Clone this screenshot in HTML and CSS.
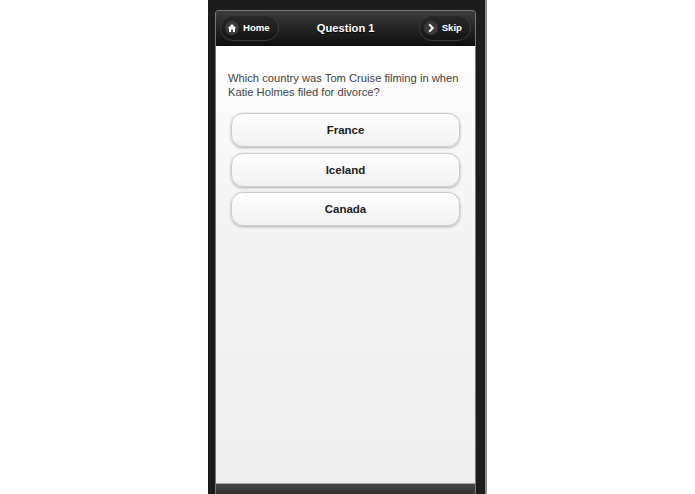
FILE: index.html
```html
<!DOCTYPE html>
<html lang="en">
<head>
    <meta charset="UTF-8">
    <title>Question 1</title>
    <link rel="stylesheet" href="styles.css">
</head>
<body>
    <div class="phone">
        <div class="screen">
            <div class="header">
                <a class="nav-btn">
                    <span class="nav-icon">
                        <svg width="10" height="10" viewBox="0 0 10 10"><path d="M5 1 L9.2 5.2 H8 V9 H5.9 V6.4 H4.1 V9 H2 V5.2 H0.8 Z" fill="#fff"/></svg>
                    </span>
                    Home
                </a>
                <h1>Question 1</h1>
                <a class="nav-btn">
                    <span class="nav-icon">
                        <svg width="10" height="10" viewBox="0 0 10 10"><path d="M3.2 1.4 L6.8 5 L3.2 8.6" fill="none" stroke="#fff" stroke-width="2"/></svg>
                    </span>
                    Skip
                </a>
            </div>
            <div class="content">
                <p class="question">Which country was Tom Cruise filming in when Katie Holmes filed for divorce?</p>
                <div class="answers">
                    <button>France</button>
                    <button>Iceland</button>
                    <button>Canada</button>
                </div>
            </div>
            <div class="footer"></div>
        </div>
    </div>
</body>
</html>
```

FILE: styles.css
```css
html, body {
    height: 100%;
}
body {
    margin: 0;
    background-color: #fff;
    font-family: "Liberation Sans", Arial, sans-serif;
    overflow: hidden;
}
.phone {
    box-sizing: border-box;
    width: 279px;
    height: 494px;
    margin-left: 208px;
    padding: 10px 9px 0 7px;
    background-color: #1c1c1c;
    border-right: 2px solid #8a8a8a;
}
.screen {
    display: flex;
    flex-direction: column;
    height: 100%;
    border-left: 1px solid #777;
    border-right: 1px solid #777;
    border-radius: 4px 4px 0 0;
}
.header {
    display: flex;
    align-items: center;
    justify-content: space-between;
    box-sizing: border-box;
    height: 36px;
    padding: 0 4px 2px 4px;
    background: linear-gradient(#3c3c3c, #0e0e0e);
    border-top: 1px solid #777;
    border-radius: 3px 3px 0 0;
}
.header h1 {
    margin: 0 0 0 -6px;
    color: #fff;
    font-size: 11.2px;
    font-weight: bold;
    text-shadow: 0 1px 1px #000;
}
.nav-btn {
    display: flex;
    align-items: center;
    gap: 4px;
    height: 24px;
    padding: 0 8px 0 4px;
    color: #fff;
    font-size: 9.6px;
    font-weight: bold;
    background: linear-gradient(#2a2a2a, #141414);
    border: 1px solid #3a3a3a;
    border-radius: 13px;
}
.nav-icon {
    display: flex;
    align-items: center;
    justify-content: center;
    width: 14px;
    height: 14px;
    background-color: #3a3a3a;
    border-radius: 50%;
}
.content {
    flex: 1;
    padding: 25px 15px 0 12px;
    background-color: #f1f1f1;
    background-image: linear-gradient(#fff, #fafafa 60px, #f3f3f3 200px, #eee);
}
.question {
    margin: 0 0 14px;
    color: #444;
    font-size: 11.2px;
    line-height: 14px;
}
.answers {
    display: flex;
    flex-direction: column;
    gap: 5.5px;
    padding-left: 3px;
}
.answers button {
    height: 34px;
    padding: 0;
    color: #222;
    font-family: inherit;
    font-size: 11.5px;
    font-weight: bold;
    background: linear-gradient(#fff, #f1f1f1);
    border: 1px solid #ccc;
    border-radius: 12px;
    box-shadow: 0 1px 3px rgba(0,0,0,0.3);
}
.footer {
    height: 10px;
    background: linear-gradient(#444, #333);
    border-top: 1px solid #aaa;
}
```
